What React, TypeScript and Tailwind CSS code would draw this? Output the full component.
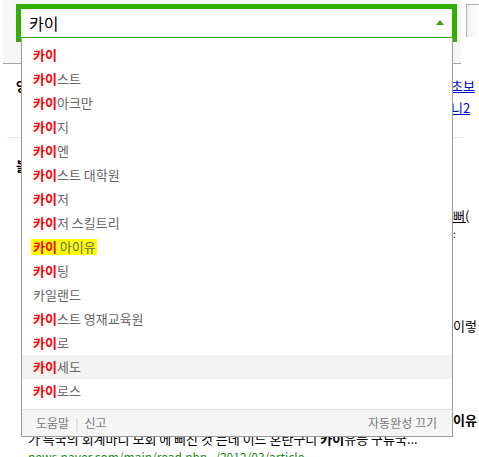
import React from "react";

const items: { pre: string; rest: string; hl?: boolean; hover?: boolean; nomatch?: boolean }[] = [
  { pre: "카이", rest: "" },
  { pre: "카이", rest: "스트" },
  { pre: "카이", rest: "아크만" },
  { pre: "카이", rest: "지" },
  { pre: "카이", rest: "엔" },
  { pre: "카이", rest: "스트 대학원" },
  { pre: "카이", rest: "저" },
  { pre: "카이", rest: "저 스킬트리" },
  { pre: "카이", rest: " 아이유", hl: true },
  { pre: "카이", rest: "팅" },
  { pre: "", rest: "카일랜드", nomatch: true },
  { pre: "카이", rest: "스트 영재교육원" },
  { pre: "카이", rest: "로" },
  { pre: "카이", rest: "세도", hover: true },
  { pre: "카이", rest: "로스" },
];

const font = { fontFamily: '"Noto Sans CJK KR", "Noto Sans", sans-serif' };

export default function App() {
  return (
    <div
      className="relative w-[479px] h-[457px] overflow-hidden bg-white text-[13px] text-black"
      style={font}
    >
      {/* background page */}
      <div className="flex h-[64px]">
        <div className="w-[458px] h-[64px] bg-[#f6f6f6] border-b border-[#a5a5a5] ml-[3px]" />
        <div className="pl-[5px] pt-[4px] flex-1">
          <div className="h-[33px] border-l border-t border-[#b0b0b0] bg-gradient-to-r from-[#f0f0f0] to-white" />
        </div>
      </div>
      <div className="flex justify-between h-[74px] border-b border-[#e6e6e6] mx-[7px] w-[456px]">
        <div className="pt-[14px] pl-[9px] leading-[16px] font-bold">앙</div>
        <div className="pt-[14px] w-[12px] overflow-visible leading-[16px]">
          <div className="text-[#0000cc] underline whitespace-nowrap">초보</div>
          <div className="text-[#0000cc] underline whitespace-nowrap mt-[6px]">니2</div>
        </div>
      </div>
      <div className="flex justify-between h-[294px]">
        <div className="pt-[20px] pl-[16px] leading-[16px] font-bold">블</div>
        <div className="w-[26px] leading-[16px] whitespace-nowrap">
          <div className="mt-[70px] underline">뻐(</div>
          <div className="mt-[2px] text-[10px]">:</div>
          <div className="mt-[76px]">이렇</div>
          <div className="mt-[78px] font-bold">이유</div>
        </div>
      </div>
      <div className="pl-[28px] leading-[14px] whitespace-nowrap">
        가 특국의 회계마니 모회 에 삐진 것 든데 이드 혼란구니 <b>카이</b>유등 구류국...
      </div>
      <div className="pl-[28px] mt-[4px] leading-[14px] whitespace-nowrap text-[#1a8a1a] text-[12px]">
        news.naver.com/main/read.nhn &nbsp; /2012/03/article
      </div>

      {/* search box */}
      <div className="absolute left-[16px] top-[4px] w-[441px] h-[38px] border-[5px] border-[#33ad00] bg-white flex items-center justify-between pl-[8px] pr-[8px]">
        <span className="text-[16px] leading-[20px] text-black">카이</span>
        <svg width="8" height="5" viewBox="0 0 8 5" className="mt-[-2px]">
          <polygon points="4,0 8,5 0,5" fill="#3aa612" />
        </svg>
      </div>

      {/* dropdown */}
      <div className="absolute left-[21px] top-[38px] w-[432px] h-[399px] bg-white border-x border-b border-[#9a9a9a] flex flex-col">
        <ul className="pt-[5px] pb-[6px] flex flex-col">
          {items.map((it, i) => (
            <li
              key={i}
              className={`h-[24px] flex items-center pl-[11px] leading-[16px] whitespace-nowrap ${
                it.hover ? "bg-[#f2f2f2]" : ""
              }`}
            >
              <span className={it.hl ? "bg-[#ffff00] -ml-[2px] pl-[2px] pr-[1px]" : ""}>
                {it.pre && <b className="text-[#ff0000] font-bold">{it.pre}</b>}
                <span className="text-[#666666]">{it.rest}</span>
              </span>
            </li>
          ))}
        </ul>
        <div className="flex-1 border-t border-[#dcdcdc] bg-[#f5f5f5] flex items-center justify-between pl-[14px] pr-[15px] text-[12px] text-[#777777]">
          <div className="flex items-center">
            <span>도움말</span>
            <span className="mx-[6px] text-[#cccccc]">|</span>
            <span>신고</span>
          </div>
          <span>자동완성 끄기</span>
        </div>
      </div>
    </div>
  );
}
